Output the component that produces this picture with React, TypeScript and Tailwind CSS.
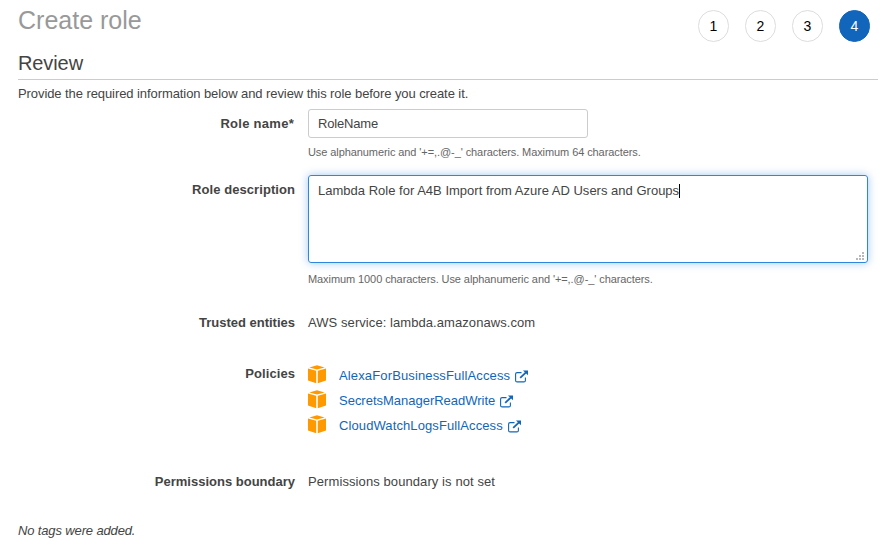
import type { ReactNode } from 'react';

const policies = [
  { name: 'AlexaForBusinessFullAccess', width: 'w-[171px]', tracking: 'tracking-[0.14px]' },
  { name: 'SecretsManagerReadWrite', width: 'w-[156px]', tracking: 'tracking-[-0.01px]' },
  { name: 'CloudWatchLogsFullAccess', width: 'w-[164px]', tracking: 'tracking-[0.1px]' },
];

function Step({ n, active = false }: { n: number; active?: boolean }) {
  return (
    <div
      className={
        'flex h-8 w-[31px] items-center justify-center rounded-full border text-[14px] ' +
        (active ? 'border-[#1166bb] bg-[#1166bb] text-white' : 'border-[#dddddd] bg-white text-black')
      }
    >
      {n}
    </div>
  );
}

function Row({ label, height, children }: { label: ReactNode; height: string; children: ReactNode }) {
  return (
    <div className={'flex ' + height}>
      <div className="mr-[13px] w-[277px] shrink-0 whitespace-nowrap text-right font-bold">{label}</div>
      <div className="min-w-0">{children}</div>
    </div>
  );
}

function PolicyIcon() {
  return (
    <svg width="18" height="19" viewBox="0 0 18 19" fill="#ff9900" className="shrink-0">
      <path d="M9 0.2 16.6 2.4 9 4.6 1.4 2.4Z" />
      <path d="M0 3.4 8.2 5.8V18.3L0 15.4Z" />
      <path d="M18 3.4 9.8 5.8V18.3L18 15.4Z" />
    </svg>
  );
}

function ExternalIcon() {
  return (
    <svg width="14" height="13" viewBox="0 0 14 13" fill="none" stroke="#1166bb" className="shrink-0">
      <path d="M6.5 2.6H2.1A1.5 1.5 0 0 0 0.6 4.1V10.4A1.5 1.5 0 0 0 2.1 11.9H8.9A1.5 1.5 0 0 0 10.4 10.4V7.5" strokeWidth="1.1" />
      <path d="M5.2 7.8 11 2.4" strokeWidth="1.8" />
      <path d="M8 0.5H13V5.3Z" fill="#1166bb" stroke="none" />
    </svg>
  );
}

export default function App() {
  return (
    <div className="h-[547px] w-[896px] overflow-hidden bg-white pl-[18px] font-['Liberation_Sans',Arial,sans-serif] text-[13px] leading-5 text-[#444444]">
      <div className="flex h-[50px] justify-between pr-[26px]">
        <h1 className="pt-[5px] text-[25px] leading-[30px] text-[#999999]">Create role</h1>
        <div className="flex gap-4 pt-[10px]">
          <Step n={1} />
          <Step n={2} />
          <Step n={3} />
          <Step n={4} active />
        </div>
      </div>
      <h2 className="h-[30px] w-[860px] border-b border-[#cccccc] text-[20px] leading-[26px] tracking-[-0.1px]">Review</h2>
      <p className="h-[29px] whitespace-nowrap pt-[4px] tracking-[-0.08px]">
        Provide the required information below and review this role before you create it.
      </p>
      <Row label={<div className="pr-px pt-[5px] tracking-[0.28px]">Role name*</div>} height="h-[66px]">
        <div className="h-[29px] w-[280px] rounded-[3px] border border-[#cccccc] pl-[9px] pt-[4px] tracking-[-0.18px]">
          RoleName
        </div>
        <div className="whitespace-nowrap pt-[4px] text-[11px] tracking-[-0.085px] text-[#666666]">
          Use alphanumeric and '+=,.@-_' characters. Maximum 64 characters.
        </div>
      </Row>
      <Row label={<div className="pt-[5px] tracking-[0.07px]">Role description</div>} height="h-[138px]">
        <div className="flex h-[88px] w-[560px] justify-between rounded-[3px] border border-[#2f86dd] pl-[9px] pt-[5px] shadow-[0_0_8px_rgba(47,134,221,0.45)]">
          <div className="flex h-5 items-center whitespace-nowrap tracking-[0.01px]">
            Lambda Role for A4B Import from Azure AD Users and Groups
            <span className="h-[14px] w-px bg-black" />
          </div>
          <svg width="8" height="8" viewBox="0 0 8 8" fill="#b8b8b8" shapeRendering="crispEdges" className="mb-[2px] mr-[3px] self-end">
            <path d="M6 0h2v2H6zM3 3h2v2H3zM6 3h2v2H6zM0 6h2v2H0zM3 6h2v2H3zM6 6h2v2H6z" />
          </svg>
        </div>
        <div className="whitespace-nowrap pt-[6px] text-[11px] tracking-[-0.085px] text-[#666666]">
          Maximum 1000 characters. Use alphanumeric and '+=,.@-_' characters.
        </div>
      </Row>
      <Row label="Trusted entities" height="h-[51px]">
        <span className="tracking-[0.07px]">AWS service: lambda.amazonaws.com</span>
      </Row>
      <Row label={<div className="tracking-[0.07px]">Policies</div>} height="h-[108px]">
        {policies.map((p) => (
          <div key={p.name} className="flex h-[25px] items-start text-[#1166bb]">
            <div className="w-[31px] pt-px">
              <PolicyIcon />
            </div>
            <div className={'mr-[5px] whitespace-nowrap pt-[2px] ' + p.width + ' ' + p.tracking}>{p.name}</div>
            <div className="pt-[6px]">
              <ExternalIcon />
            </div>
          </div>
        ))}
      </Row>
      <Row label="Permissions boundary" height="h-[49px]">
        <span className="tracking-[0.09px]">Permissions boundary is not set</span>
      </Row>
      <p className="italic tracking-[-0.14px]">No tags were added.</p>
    </div>
  );
}
